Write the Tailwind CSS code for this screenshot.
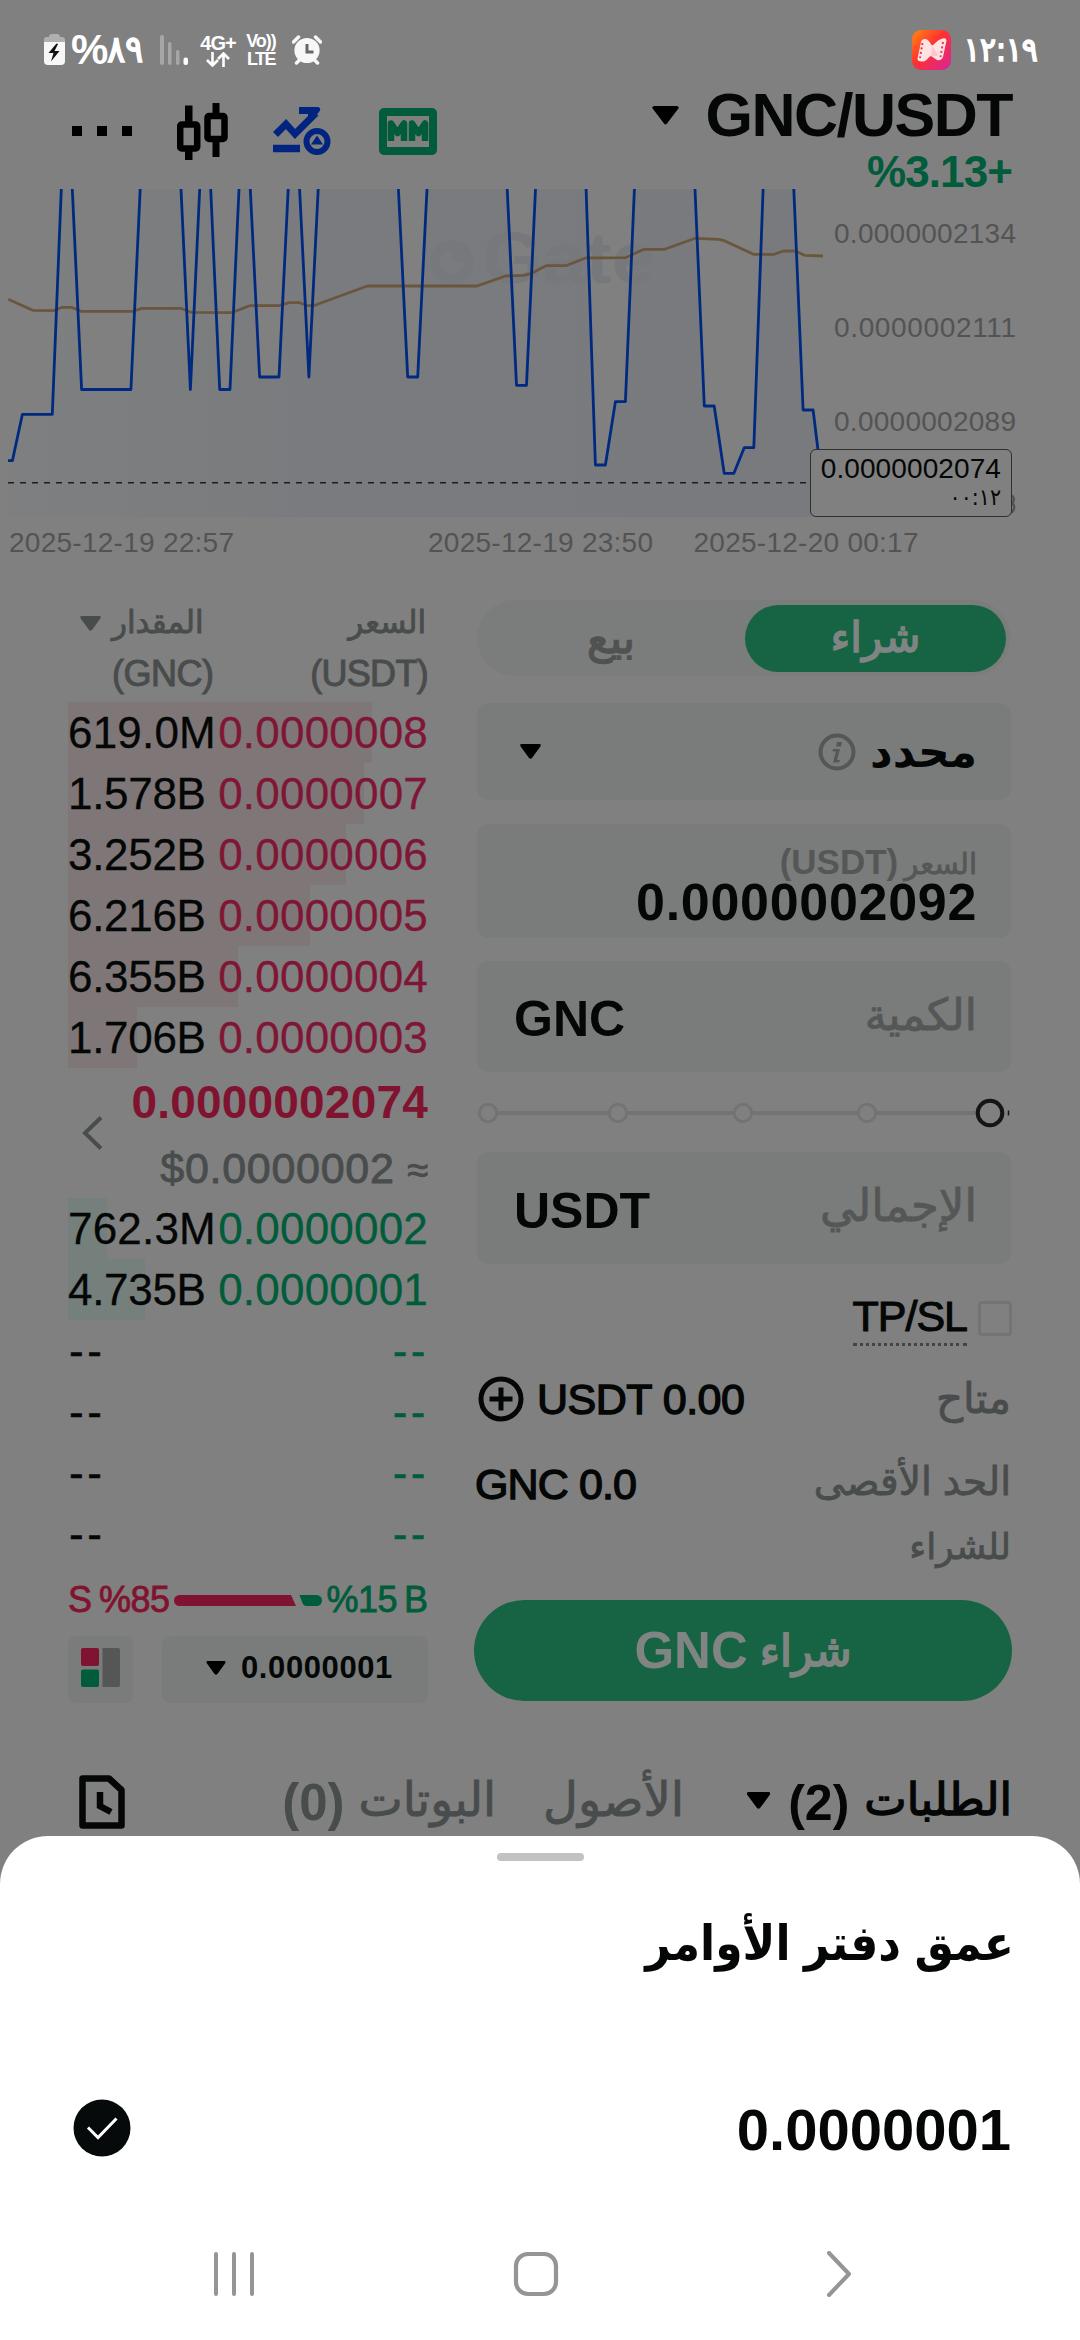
<!DOCTYPE html>
<html lang="ar">
<head>
<meta charset="utf-8">
<title>GNC/USDT</title>
<script src="https://cdn.jsdelivr.net/npm/@tailwindcss/browser@4"></script>
</head>
<body class="bg-[#808080]">
<main class="relative flex h-[2340px] w-[1080px] flex-col overflow-hidden bg-[#808080] font-['Liberation_Sans','DejaVu_Sans',sans-serif] text-[#050707]">

  <!-- Status bar -->
  <div class="flex h-[84px] shrink-0 items-center pt-4 pl-[44px] pr-[46px] text-white">
    <svg class="h-[34px] w-[21px] shrink-0" viewBox="0 0 21 34"><path d="M5 4q0-3 3-3h5q3 0 3 3h2q3 0 3 3v4H0V7q0-3 3-3z" fill="#b0b0b0"/><path d="M0 9h21v19q0 4-4 4H4q-4 0-4-4z" fill="#f7f7f7"/><path d="M12.500 10.500L4.500 20h5L7 28.500 15.500 18h-5l3.500-7z" fill="#111"/></svg>
    <span dir="ltr" class="ml-[6px] flex w-[80px] shrink-0 items-center whitespace-nowrap leading-10"><span class="text-[42px] font-bold tracking-[-1px]">%</span><span class="font-['DejaVu_Sans_Condensed'] text-[37px] tracking-[-2.500px] [-webkit-text-stroke:1.600px]">٨٩</span></span>
    <svg class="ml-[9px] h-[30px] w-[28px] shrink-0" viewBox="0 0 28 30"><g fill="#a6a6a6"><rect x="0" y="0" width="4" height="30" rx="2"/><rect x="8" y="7" width="3.500" height="23" rx="1.700"/><rect x="16" y="15" width="3.500" height="15" rx="1.700"/></g><rect x="23.500" y="22.500" width="4.500" height="7.500" rx="2" fill="#fff"/></svg>
    <div class="ml-[12px] flex w-[36px] flex-col items-center">
      <span class="text-[20px] font-bold leading-[18px] tracking-[-1px]">4G+</span>
      <svg class="h-[15px] w-[24px]" viewBox="0 0 24 15" fill="none" stroke="#fff" stroke-width="2.600"><path d="M6.500 0v13M1 8l5.500 5.500L12 8M17.500 15V2M12 7l5.500-5.500L23 7"/></svg>
    </div>
    <div class="ml-[8px] flex w-[34px] flex-col items-center text-[18px] font-bold">
      <span class="whitespace-nowrap leading-[18px] tracking-[-1px]">Vo))</span>
      <span class="leading-[18px] tracking-[-1.500px]">LTE</span>
    </div>
    <svg class="ml-[14px] h-[30px] w-[30px] shrink-0" viewBox="0 0 30 30"><circle cx="15" cy="15.500" r="12.600" fill="#f7f7f7"/><path d="M1.500 7l5-5M28.500 7l-5-5M4.500 28l3-3M25.500 28l-3-3" stroke="#f7f7f7" stroke-width="3.500" stroke-linecap="round"/><path d="M15 9v8h6.500" fill="none" stroke="#666" stroke-width="3"/></svg>
    <svg class="ml-auto h-[40px] w-[39px] shrink-0" viewBox="0 0 39 40"><defs><linearGradient id="app" x1="0" y1="0" x2="1" y2="1"><stop offset="0" stop-color="#ff8a10"/><stop offset=".45" stop-color="#ff3030"/><stop offset="1" stop-color="#d8249c"/></linearGradient></defs><rect width="39" height="40" rx="9" fill="url(#app)"/><path d="M9 12q1-3.500 4.500-3c3.500.5 5 5.500 7 6.500l5.500-5q8-4.500 8.500 0l-3.500 16.500q-2 4-6 3l-6-4c-3 1-3.500 5-8 5.500q-6 .5-5.500-3z" fill="#ffe3e3"/><path d="M20.500 15.500L26 26l-7 0z" fill="#ffc4cf"/><path d="M10.500 13L8 28M31 12l-2.500 15" stroke="#f0364a" stroke-width="2" stroke-dasharray="2 2.500"/></svg>
    <span dir="ltr" class="ml-[13px] w-[70px] whitespace-nowrap font-['DejaVu_Sans_Condensed'] text-[33px] leading-10 tracking-[-4.500px] [-webkit-text-stroke:1.600px]">١٢:١٩</span>
  </div>

  <!-- Pair header -->
  <header class="flex h-[105px] shrink-0 justify-between pl-[72px] pr-[68px]">
    <div class="flex h-[94px] items-center">
      <svg class="h-[10px] w-[61px]" viewBox="0 0 61 10"><path d="M0 0h10v10H0zM25 0h10v10H25zM50 0h10v10H50z"/></svg>
      <svg class="ml-[44px] h-[57px] w-[51px]" viewBox="0 0 51 57"><path d="M8 2.500h7.500v17H8zM8 47h7.500v10.500H8zM35.500 0h7v12h-7zM35.500 38h7v16h-7z"/><rect x="3.200" y="21.500" width="17" height="24" rx="1.500" fill="none" stroke="#000" stroke-width="6.500"/><rect x="30.500" y="13" width="17" height="23" rx="1.500" fill="none" stroke="#000" stroke-width="6.500"/></svg>
      <svg class="ml-[45px] h-[49px] w-[58px]" viewBox="0 0 58 49"><g fill="none" stroke="#00247f"><path d="M2.500 27.500L13 17l9 10L43 6" stroke-width="7"/><path d="M0 41.500h27" stroke-width="7.500"/><circle cx="44" cy="34.500" r="10.500" stroke-width="6"/></g><path d="M26 0h19q4 1 1 5L35 18V7h-9z" fill="#00247f"/><path d="M44 28.500l6 9H38z" fill="#00247f"/></svg>
      <svg class="ml-[48px] h-[47px] w-[58px]" viewBox="0 0 58 47"><rect x="4" y="4" width="50" height="39" rx="1" fill="none" stroke="#005c3a" stroke-width="8"/><path d="M12 33V15.500l6.500 9.500 6.500-9.500V33M33 33V15.500l6.500 9.500 6.500-9.500V33" fill="none" stroke="#005c3a" stroke-width="6.500" stroke-linejoin="round"/></svg>
    </div>
    <div class="flex flex-col items-end">
      <div class="flex h-[60px] items-center pt-[2px]">
        <svg class="mr-[26px] h-[19px] w-[27px]" viewBox="0 0 27 19"><path d="M2 0h23q3 1 1 3L15 17.500q-1.500 2-3 0L1 3Q-1 1 2 0z"/></svg>
        <h1 class="text-[61px] font-bold leading-[60px] tracking-[-1.500px]">GNC/USDT</h1>
      </div>
      <div dir="ltr" class="mt-[6px] text-[44px] font-bold leading-[44px] tracking-[-0.900px] text-[#005c3a]">%3.13+</div>
    </div>
  </header>

  <!-- Chart -->
  <section class="relative h-[371px] shrink-0">
    <svg class="h-[371px] w-[1080px]" viewBox="0 189 1080 371" font-family="Liberation Sans, sans-serif">
      <defs><linearGradient id="area" x1="0" x2="1"><stop offset="0" stop-color="#7e7f80"/><stop offset=".4" stop-color="#7a7b7e"/><stop offset="1" stop-color="#797a7e"/></linearGradient></defs>
      <path fill="url(#area)" d="M8 517V460.700H12.400L22.400 414.300H52.300L61.300 189H72.300L81.600 389.500H130.900L140.200 189H181L190.400 389.500L199.700 189H210.700L219.700 389.500H230L239 189H250.300L259.600 377H279L288.200 189H299.600L308.900 377L318.200 189H398.400L407.700 377H417.700L427 189H507.200L516.500 385.300H526.500L535.500 189H586.100L595.400 465H605.400L615.400 401.700H625.400L634.400 189H695L704.300 406H714.200L724.200 473.300H733.900L744.200 447.700H753.800L763.100 189H793.800L803.100 410H813.100L822 483V517Z"/>
      <g fill="#77787b"><circle cx="452" cy="262" r="17" fill="none" stroke="#77787b" stroke-width="9"/><rect x="452" y="250" width="12" height="12"/><text x="482" y="283" font-size="72" font-weight="700" textLength="173" lengthAdjust="spacingAndGlyphs">Gate</text></g>
      <path fill="none" stroke="#6a563d" stroke-width="2.800" stroke-linejoin="round" d="M8.300 299.300L32.700 310.300L53.400 310.700L62 307.300H71.600L81 311.300H132.600L141.900 308.300H180.800L191 312.300L231.400 312.700L249.700 305.700H279L289.300 302.700H299.600L307.500 305.700H313.400L367.400 286H477L505.500 276L523.400 275.300L532 273.300L540 268.700L546.200 265.700H565.800L585.500 258L625.400 257.700L644 249.300H664.700L695 238.300L719 239.300L724.200 240.700L753.500 254.300H774.200L783.500 251H795.500L804.500 255.300L823 256"/>
      <path fill="none" stroke="#002a80" stroke-width="2.800" stroke-linejoin="round" d="M8 460.700H12.400L22.400 414.300H52.300L61.300 189M72.300 189L81.600 389.500H130.900L140.200 189M181 189L190.400 389.500L199.700 189M210.700 189L219.700 389.500H230L239 189M250.300 189L259.600 377H279L288.200 189M299.600 189L308.900 377L318.200 189M398.400 189L407.700 377H417.700L427 189M507.200 189L516.500 385.300H526.500L535.500 189M586.100 189L595.400 465H605.400L615.400 401.700H625.400L634.400 189M695 189L704.300 406H714.200L724.200 473.300H733.900L744.200 447.700H753.800L763.100 189M793.800 189L803.100 410H813.100L822 483"/>
      <path d="M8 482.700H810" stroke="#1c1d20" stroke-width="1.600" stroke-dasharray="6 6"/>
      <g fill="#525454" font-size="28">
        <text x="834" y="243" textLength="182">0.0000002134</text>
        <text x="834" y="337" textLength="182">0.0000002111</text>
        <text x="834" y="431" textLength="182">0.0000002089</text>
        <text x="9" y="552" textLength="225">2025-12-19 22:57</text>
        <text x="428" y="552" textLength="225">2025-12-19 23:50</text>
        <text x="693.500" y="552" textLength="225">2025-12-20 00:17</text>
        <path d="M1010 495q6 2 2.500 8q4 6-2 10" fill="none" stroke="#525454" stroke-width="2.500"/>
      </g>
    </svg>
    <div class="absolute left-[810px] top-[260px] flex h-[68px] w-[202px] flex-col items-end rounded-md border-[1.500px] border-[#2e2f30] bg-[#808080] pr-[10px] pt-[4px]">
      <span class="text-[28px] leading-[30px] tracking-[0.100px]">0.0000002074</span>
      <span dir="ltr" class="pt-px font-['DejaVu_Sans_Condensed'] text-[23px] leading-[24px] tracking-[-1px]">٠٠:١٢</span>
    </div>
  </section>

  <!-- Order book and order form -->
  <section class="flex h-[1180px] shrink-0 items-start pl-[68px]">
    <div class="flex w-[360px] flex-col">
      <div class="mt-[40px] flex h-[46px] items-center justify-between pl-[12px] pr-[2px] text-[31px] leading-[46px] text-[#494c4c]">
        <span class="flex items-center"><svg class="mr-[11px] h-[15px] w-[21px]" viewBox="0 0 21 15"><path d="M1 0h19q1.500 1 0 3l-8 11q-1.500 1.500-3 0L1 3Q-.500 1 1 0z" fill="#494c4c"/></svg><span dir="rtl" class="[-webkit-text-stroke:0.900px]">المقدار</span></span>
        <span dir="rtl" class="[-webkit-text-stroke:0.900px]">السعر</span>
      </div>
      <div class="flex h-[56px] items-center justify-between pl-[44px] text-[36px] text-[#494c4c] [-webkit-text-stroke:1px]">
        <span class="tracking-[-0.500px]">(GNC)</span><span class="tracking-[-0.700px]">(USDT)</span>
      </div>

      <div class="flex flex-col text-[44px] leading-[62px] tracking-[0.200px] [-webkit-text-stroke:0.300px]">
        <div class="flex h-[61px] justify-between bg-[linear-gradient(#7f7777,#7f7777)] bg-no-repeat bg-[length:304px_100%]"><span>619.0M</span><span class="text-[#7f1636]">0.0000008</span></div>
        <div class="flex h-[61px] justify-between bg-[linear-gradient(#7f7777,#7f7777)] bg-no-repeat bg-[length:296px_100%]"><span class="tracking-[-0.300px]">1.578B</span><span class="text-[#7f1636]">0.0000007</span></div>
        <div class="flex h-[61px] justify-between bg-[linear-gradient(#7f7777,#7f7777)] bg-no-repeat bg-[length:278px_100%]"><span class="tracking-[-0.300px]">3.252B</span><span class="text-[#7f1636]">0.0000006</span></div>
        <div class="flex h-[61px] justify-between bg-[linear-gradient(#7f7777,#7f7777)] bg-no-repeat bg-[length:242px_100%]"><span class="tracking-[-0.300px]">6.216B</span><span class="text-[#7f1636]">0.0000005</span></div>
        <div class="flex h-[61px] justify-between bg-[linear-gradient(#7f7777,#7f7777)] bg-no-repeat bg-[length:170px_100%]"><span class="tracking-[-0.300px]">6.355B</span><span class="text-[#7f1636]">0.0000004</span></div>
        <div class="flex h-[61px] justify-between bg-[linear-gradient(#7f7777,#7f7777)] bg-no-repeat bg-[length:69px_100%]"><span class="tracking-[-0.300px]">1.706B</span><span class="text-[#7f1636]">0.0000003</span></div>
      </div>

      <div class="flex h-[130px] items-center justify-between pl-[14px]">
        <svg class="h-[34px] w-[21px]" viewBox="0 0 21 34"><path d="M19 1.500L3 17l16 15.500" fill="none" stroke="#494c4c" stroke-width="4"/></svg>
        <div class="flex flex-col items-end">
          <span class="pt-px text-[46px] font-bold leading-[68px] tracking-[0.200px] text-[#80132f]">0.0000002074</span>
          <span class="pt-[3px] text-[43px] leading-[59px] tracking-[0.700px] text-[#494c4c] [-webkit-text-stroke:0.900px]">$0.0000002 <span class="text-[38px] tracking-normal">≈</span></span>
        </div>
      </div>

      <div class="flex flex-col text-[44px] leading-[62px] tracking-[0.200px] [-webkit-text-stroke:0.300px]">
        <div class="flex h-[61px] justify-between bg-[linear-gradient(#757f7c,#757f7c)] bg-no-repeat bg-[length:39px_100%]"><span>762.3M</span><span class="text-[#005c3a]">0.0000002</span></div>
        <div class="flex h-[61px] justify-between bg-[linear-gradient(#757f7c,#757f7c)] bg-no-repeat bg-[length:77px_100%]"><span class="tracking-[-0.300px]">4.735B</span><span class="text-[#005c3a]">0.0000001</span></div>
        <div class="flex h-[61px] justify-between pl-px tracking-[3.500px]"><span>--</span><span class="-mr-px text-[#005c3a]">--</span></div>
        <div class="flex h-[61px] justify-between pl-px tracking-[3.500px]"><span>--</span><span class="-mr-px text-[#005c3a]">--</span></div>
        <div class="flex h-[61px] justify-between pl-px tracking-[3.500px]"><span>--</span><span class="-mr-px text-[#005c3a]">--</span></div>
        <div class="flex h-[61px] justify-between pl-px tracking-[3.500px]"><span>--</span><span class="-mr-px text-[#005c3a]">--</span></div>
      </div>

      <div class="flex h-[72px] items-center justify-between text-[36px] [-webkit-text-stroke:0.800px]">
        <span dir="ltr" class="flex gap-[7px] text-[#80132f]"><span>S</span><span class="tracking-[-0.500px]">%85</span></span>
        <svg class="h-[11px] w-[148px] shrink-0" viewBox="0 0 148 11"><path d="M5.500 0H117l5 11H5.500a5.500 5.500 0 010-11z" fill="#80132f"/><path d="M125.500 0h17a5.500 5.500 0 010 11h-10q-3 0-4-3z" fill="#005c3a"/></svg>
        <span dir="ltr" class="flex gap-[7px] text-[#005c3a]"><span class="tracking-[-0.500px]">%15</span><span>B</span></span>
      </div>

      <div class="flex h-[67px] justify-between">
        <div class="flex w-[65px] items-center justify-center rounded-lg bg-[#797c7b]">
          <svg class="-mt-[4px] -ml-px h-[39px] w-[39px]" viewBox="0 0 39 39"><rect width="18" height="18" rx="2" fill="#80132f"/><rect y="21.500" width="18" height="17.500" rx="2" fill="#005c3a"/><path d="M21.500 0H37q2 0 2 2v35q0 2-2 2H21.500z" fill="#555757"/></svg>
        </div>
        <div class="flex w-[266px] items-center rounded-lg bg-[#797c7b] pb-[3px] pl-[44px]">
          <svg class="h-[14px] w-[20px]" viewBox="0 0 21 15"><path d="M1 0h19q1.500 1 0 3l-8 11q-1.500 1.500-3 0L1 3Q-.500 1 1 0z"/></svg>
          <span class="ml-[15px] text-[31px] font-bold leading-[30px] tracking-[0.600px]">0.0000001</span>
        </div>
      </div>
    </div>

    <div class="ml-[46px] flex w-[538px] flex-col">
      <div class="mt-[40px] ml-[3px] flex h-[76px] w-[533px] items-center rounded-full bg-[#7a7d7c]">
        <div dir="rtl" class="w-[270px] text-center text-[43px] leading-[60px] text-[#505252] [-webkit-text-stroke:1.500px]">بيع</div>
        <div dir="rtl" class="mr-[4px] h-[67px] w-[263px] rounded-full bg-[#166443] text-center text-[42px] leading-[65px] text-[#808583] [-webkit-text-stroke:1.500px]">شراء</div>
      </div>

      <div class="mt-[27px] ml-[3px] flex h-[97px] w-[534px] items-center justify-between rounded-xl bg-[#797c7b] pl-[43px] pr-[34px]">
        <svg class="h-[15px] w-[21px]" viewBox="0 0 21 15"><path d="M1 0h19q1.500 1 0 3l-8 11q-1.500 1.500-3 0L1 3Q-.500 1 1 0z"/></svg>
        <div class="flex items-center">
          <svg class="mr-[14px] h-[38px] w-[38px]" viewBox="0 0 38 38"><circle cx="19" cy="19" r="16.500" fill="none" stroke="#555757" stroke-width="4"/><path d="M19 9h5l-1 4.500h-5zM15 16h7l-3 11h3l-1 2.500h-6l3-11h-3.500z" fill="#555757"/></svg>
          <span dir="rtl" class="text-[44px] font-bold leading-[60px]">محدد</span>
        </div>
      </div>

      <div class="mt-[24px] ml-[3px] flex h-[114px] w-[534px] flex-col items-end rounded-xl bg-[#797c7b] pr-[34px] pt-[19px]">
        <span dir="rtl" class="flex items-baseline gap-[6px] leading-[38px] text-[#555757]"><span class="text-[29px] [-webkit-text-stroke:0.800px]">السعر</span><span class="text-[35px] font-bold">(USDT)</span></span>
        <span class="text-[52px] font-bold leading-[38px] tracking-[0.700px]">0.0000002092</span>
      </div>

      <div class="mt-[23px] ml-[3px] flex h-[111px] w-[534px] items-center justify-between rounded-xl bg-[#797c7b] pl-[37px] pr-[34px]">
        <span class="pt-[4px] text-[50px] font-bold leading-[60px]">GNC</span>
        <span dir="rtl" class="pb-[4px] text-[44px] leading-[60px] text-[#555757] [-webkit-text-stroke:0.900px]">الكمية</span>
      </div>

      <svg class="h-[80px] w-[538px]" viewBox="474 1072 538 80"><path d="M498 1113H609M628 1113H733M752 1113H858M877 1113H976" stroke="#727474" stroke-width="4"/><g fill="none" stroke="#727474" stroke-width="3"><circle cx="488" cy="1113" r="8.700"/><circle cx="618" cy="1113" r="8.700"/><circle cx="743" cy="1113" r="8.700"/><circle cx="867" cy="1113" r="8.700"/></g><circle cx="990" cy="1113" r="12.300" fill="none" stroke="#141515" stroke-width="4"/><path d="M1008.500 1110.500v5" stroke="#141515" stroke-width="1.500"/></svg>

      <div class="ml-[3px] flex h-[112px] w-[534px] items-center justify-between rounded-xl bg-[#797c7b] pl-[37px] pr-[34px]">
        <span class="pt-[6px] text-[50px] font-bold leading-[60px]">USDT</span>
        <span dir="rtl" class="pb-[4px] text-[45px] leading-[60px] text-[#555757] [-webkit-text-stroke:0.900px]">الإجمالي</span>
      </div>

      <div class="mt-[28px] flex h-[55px] items-start justify-end">
        <span class="border-b-[3px] border-dotted border-[#444646] pb-[3px] text-[43px] leading-[48px] tracking-[-1px] [-webkit-text-stroke:1.100px]">TP/SL</span>
        <span class="ml-[11px] mt-[9px] h-[35px] w-[34px] rounded border-[3px] border-[#737474]"></span>
      </div>

      <div class="mt-[22px] flex h-[60px] items-center justify-between pl-[4px] pr-px">
        <span class="flex items-center">
          <svg class="h-[46px] w-[46px]" viewBox="0 0 46 46" fill="none" stroke="#050707" stroke-width="5"><circle cx="23" cy="23" r="20"/><path d="M23 11.500v23M11.500 23h23"/></svg>
          <span class="ml-[13px] text-[43px] leading-[60px] tracking-[-0.500px] [-webkit-text-stroke:1.400px]">USDT 0.00</span>
        </span>
        <span dir="rtl" class="text-[42px] leading-[60px] text-[#494c4c] [-webkit-text-stroke:0.800px]">متاح</span>
      </div>

      <div class="mt-[25px] flex items-start justify-between pr-px">
        <span class="pl-px text-[43px] leading-[60px] tracking-[-0.900px] [-webkit-text-stroke:1.400px]">GNC 0.0</span>
        <span dir="rtl" class="-mt-[5px] flex flex-col text-[39px] leading-[65px] text-[#494c4c] [-webkit-text-stroke:0.800px]"><span>الحد الأقصى</span><span class="text-[36px]">للشراء</span></span>
      </div>

      <div dir="rtl" class="mt-[21px] flex h-[101px] items-center justify-center gap-[12px] rounded-full bg-[#166443] text-[#808583]"><span class="text-[43px] leading-[60px] [-webkit-text-stroke:1.800px]">شراء</span><span class="pt-px text-[51px] font-bold leading-[60px]">GNC</span></div>
    </div>
  </section>

  <!-- Bottom tabs -->
  <nav class="flex h-[120px] shrink-0 items-center justify-between pl-[79px] pr-[68px]">
    <svg class="mt-[4px] h-[54px] w-[46px]" viewBox="0 0 46 54" fill="none" stroke="#050707" stroke-width="6.500"><path d="M3.500 3.500H30L42.500 15V50.500H3.500z" stroke-linejoin="round"/><path d="M21 17v14l11 6"/></svg>
    <div dir="rtl" class="flex items-center leading-[64px]">
      <span class="text-[45px] [-webkit-text-stroke:1.400px]">الطلبات</span>
      <span class="mr-[15px] pt-[5px] text-[50px] font-bold">(2)</span>
      <svg class="mr-[17px] h-[17px] w-[25px]" viewBox="0 0 21 15"><path d="M1 0h19q1.500 1 0 3l-8 11q-1.500 1.500-3 0L1 3Q-.500 1 1 0z"/></svg>
      <span class="mr-[62px] text-[48px] text-[#494c4c] [-webkit-text-stroke:0.900px]">الأصول</span>
      <span class="mr-[47px] text-[47px] text-[#494c4c] [-webkit-text-stroke:0.900px]">البوتات</span>
      <span class="mr-[14px] pt-[5px] text-[51px] font-bold text-[#494c4c]">(0)</span>
    </div>
  </nav>

  <!-- Depth sheet -->
  <section class="absolute inset-x-0 bottom-0 flex h-[504px] flex-col rounded-t-[48px] bg-white">
    <div class="mx-auto mt-[17px] h-[8px] w-[87px] rounded-full bg-[#c0c2c4]"></div>
    <h2 dir="rtl" class="mt-[41px] pr-[66px] font-['Liberation_Sans','DejaVu_Sans_Condensed'] text-[49px] font-bold leading-[82px]">عمق دفتر الأوامر</h2>
    <div class="mt-[104px] flex h-[80px] items-center justify-between pl-[73px] pr-[69px]">
      <svg class="h-[58px] w-[58px]" viewBox="0 0 58 58"><circle cx="29" cy="29" r="28.500" fill="#070a0a"/><path d="M15 28.500l10 10 18.500-19" fill="none" stroke="#fff" stroke-width="3"/></svg>
      <span class="pt-[4px] text-[58px] font-bold leading-[76px]">0.0000001</span>
    </div>
    <div class="mt-[80px] flex h-[52px] items-center">
      <svg class="ml-[213px] h-[44px] w-[42px]" viewBox="0 0 42 44"><path d="M3 2v40M21 2v40M39 2v40" stroke="#959595" stroke-width="4" stroke-linecap="round"/></svg>
      <svg class="ml-[258px] h-[46px] w-[46px]" viewBox="0 0 46 46"><rect x="3" y="3" width="40" height="40" rx="12" fill="none" stroke="#959595" stroke-width="4.200"/></svg>
      <svg class="ml-[267px] h-[46px] w-[26px]" viewBox="0 0 26 46"><path d="M3 2l20 21L3 44" fill="none" stroke="#959595" stroke-width="4" stroke-linecap="round" stroke-linejoin="round"/></svg>
    </div>
  </section>
</main>
</body>
</html>
